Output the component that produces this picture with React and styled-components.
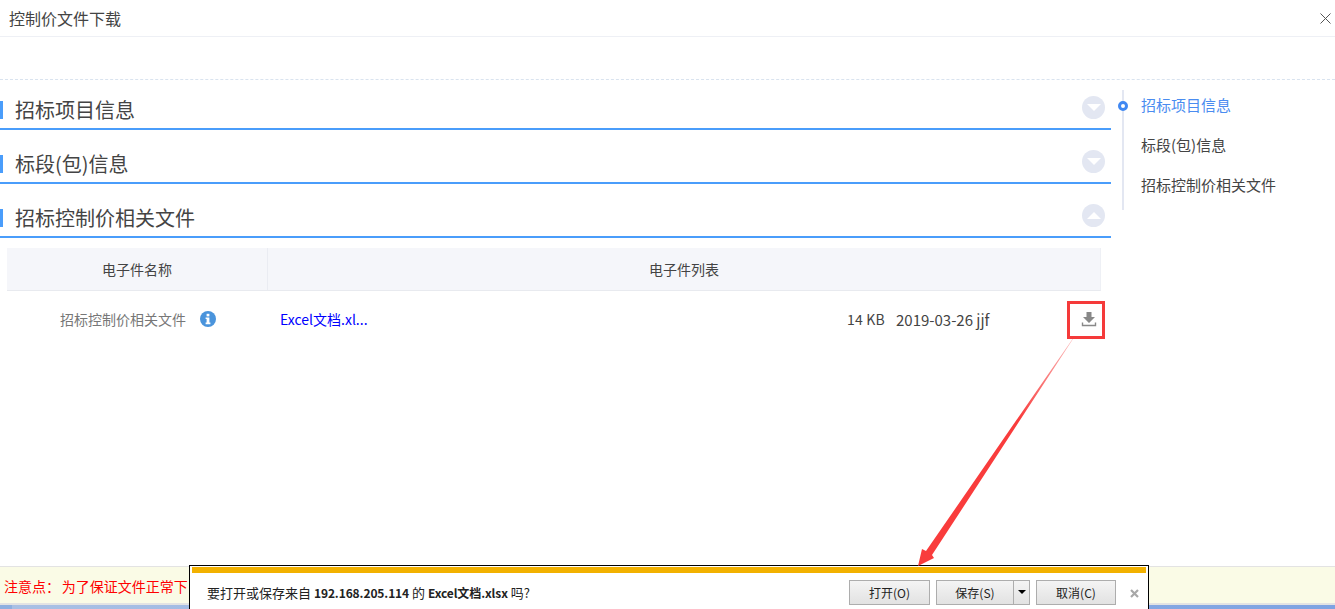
import React from 'react';
import styled, { createGlobalStyle } from 'styled-components';

const GlobalStyle = createGlobalStyle`
  html, body {
    margin: 0;
    padding: 0;
    background: #fff;
    overflow: hidden;
  }
  * {
    box-sizing: border-box;
  }
`;

const Page = styled.div`
  position: relative;
  display: flex;
  flex-direction: column;
  width: 1335px;
  height: 609px;
  overflow: hidden;
  background: #fff;
  font-family: "Noto Sans CJK SC", "Liberation Sans", sans-serif;
  font-size: 14px;
  color: #444;
`;

const Header = styled.div`
  display: flex;
  align-items: center;
  justify-content: space-between;
  height: 37px;
  padding: 0 3px 0 9px;
  border-bottom: 1px solid #eef0f5;
`;

const HeaderTitle = styled.span`
  font-size: 16px;
  line-height: 37px;
  color: #444;
`;

const CloseIcon = styled.svg`
  display: block;
  width: 13px;
  height: 13px;
`;

const Toolbar = styled.div`
  height: 43px;
  border-bottom: 1px dashed #d9e3ef;
`;

const Body = styled.div`
  flex: 1;
  display: flex;
  min-height: 0;
`;

const Main = styled.div`
  width: 1111px;
`;

const Section = styled.div`
  display: flex;
  align-items: center;
  justify-content: space-between;
  height: 54px;
  padding: 16px 6px 0 0;
  border-bottom: 2px solid #4a9dfb;
  &:first-child {
    height: 50px;
    padding-top: 12px;
  }
`;

const SectionTitle = styled.div`
  height: 18px;
  padding-left: 12px;
  border-left: 3px solid #4a9dfb;
  font-size: 20px;
  line-height: 18px;
  color: #444;
`;

const Toggle = styled.span`
  display: flex;
  align-items: center;
  justify-content: center;
  width: 23px;
  height: 23px;
  margin-top: -6px;
  border-radius: 50%;
  background: #e3e7f2;
`;

const Caret = styled.span`
  width: 0;
  height: 0;
  border-left: 7px solid transparent;
  border-right: 7px solid transparent;
  ${(p) => (p.$up ? 'border-bottom: 7px solid #fff;' : 'border-top: 7px solid #fff;')}
`;

const Table = styled.div`
  width: 1094px;
  margin: 10px 0 0 7px;
`;

const TableHead = styled.div`
  display: grid;
  grid-template-columns: 260px 1fr;
  height: 43px;
  background: #f5f6fa;
  border-right: 1px solid #eef0f5;
  border-bottom: 1px solid #e8eaef;
`;

const HeadCell = styled.div`
  display: flex;
  align-items: center;
  justify-content: center;
  color: #444;
  & + & {
    border-left: 1px solid #eaecf2;
  }
`;

const TableRow = styled.div`
  display: flex;
  align-items: center;
  height: 56px;
  color: #444;
`;

const FileLabel = styled.div`
  display: flex;
  align-items: center;
  justify-content: flex-end;
  gap: 14px;
  width: 209px;
  color: #777;
`;

const FileLink = styled.a`
  width: 567px;
  margin-left: 64px;
  color: #0000ff;
`;

const FileSize = styled.span`
  width: 49px;
  letter-spacing: 0.2px;
`;

const FileDate = styled.span`
  width: 185px;
  font-size: 15px;
`;

const DownloadIcon = styled.svg`
  display: block;
  width: 16px;
  height: 16px;
  margin-top: -1px;
`;

const Side = styled.div`
  position: relative;
  margin: 10px 0 0 11px;
  width: 200px;
  height: 120px;
  padding-left: 17px;
  border-left: 2px solid #e3e7f2;
`;

const NavItem = styled.div`
  height: 40px;
  font-size: 15px;
  line-height: 30px;
  color: ${(p) => (p.$active ? '#4a8cf0' : '#444')};
`;

const NavDot = styled.span`
  position: absolute;
  left: -6px;
  top: 11px;
  width: 10px;
  height: 10px;
  border: 3px solid #4088f2;
  border-radius: 50%;
  background: #fff;
`;

const Notice = styled.div`
  height: 39px;
  padding: 1px 0 0 4px;
  background: #fafbe6;
  border-top: 1px solid #e3e3e3;
  border-bottom: 2px solid #e3e3e3;
  color: #ff0000;
  font-size: 14px;
  line-height: 36px;
  word-spacing: -1.5px;
  white-space: nowrap;
`;

const BlueBand = styled.div`
  height: 4px;
  background: linear-gradient(to right, #8fb0e0 0, #8fb0e0 12px, #a9c0e4 12px, #7ea3e2 100%);
`;

const Marker = styled.div`
  position: absolute;
  left: 1067px;
  top: 301px;
  width: 38px;
  height: 38px;
  border: 3px solid #f53a3a;
`;

const ArrowLayer = styled.svg`
  position: absolute;
  left: 0;
  top: 0;
  width: 1335px;
  height: 609px;
  pointer-events: none;
  z-index: 3;
`;

const DownloadBar = styled.div`
  position: absolute;
  left: 189px;
  top: 565px;
  width: 960px;
  height: 44px;
  padding: 1px 1px 0 1px;
  background: #fff;
  border: 1px solid #000;
  border-bottom: 0;
  z-index: 2;
  font-size: 12px;
  color: #222;
`;

const Progress = styled.div`
  height: 6px;
  margin: 0 1px;
  background: #f2b100;
`;

const BarRow = styled.div`
  display: flex;
  align-items: center;
  height: 36px;
  padding: 2px 0 0 16px;
`;

const Question = styled.div`
  flex: 1;
  font-size: 13px;
  white-space: nowrap;
  b {
    font-size: 12px;
    font-weight: 700;
    letter-spacing: -0.1px;
  }
`;

const Btn = styled.div`
  display: flex;
  align-items: center;
  justify-content: center;
  width: ${(p) => p.$w}px;
  height: 25px;
  margin-right: 6px;
  background: linear-gradient(to bottom, #f4f4f4, #e2e2e2);
  border: 1px solid #adadad;
  color: #222;
`;

const SplitBtn = styled.div`
  display: flex;
  width: 94px;
  height: 25px;
  margin-right: 6px;
  border: 1px solid #adadad;
  background: linear-gradient(to bottom, #f4f4f4, #e2e2e2);
`;

const SplitLabel = styled.span`
  flex: 1;
  display: flex;
  align-items: center;
  justify-content: center;
`;

const SplitCaret = styled.span`
  display: flex;
  align-items: center;
  justify-content: center;
  width: 16px;
  border-left: 1px solid #adadad;
  &::after {
    content: '';
    border-left: 4px solid transparent;
    border-right: 4px solid transparent;
    border-top: 4px solid #000;
  }
`;

const BarClose = styled.svg`
  display: block;
  width: 9px;
  height: 9px;
  margin: 2px 8px 0 8px;
`;

const sections = [
  { title: '招标项目信息' },
  { title: '标段(包)信息' },
  { title: '招标控制价相关文件', open: true },
];

const navItems = ['招标项目信息', '标段(包)信息', '招标控制价相关文件'];

const App = () => {
  return (
    <Page>
      <GlobalStyle />
      <Header>
        <HeaderTitle>控制价文件下载</HeaderTitle>
        <CloseIcon viewBox="0 0 13 13">
          <path d="M1.5 1.5L11.5 11.5M11.5 1.5L1.5 11.5" stroke="#555" strokeWidth="1" fill="none" />
        </CloseIcon>
      </Header>
      <Toolbar />
      <Body>
        <Main>
          {sections.map((s) => (
            <Section key={s.title}>
              <SectionTitle>{s.title}</SectionTitle>
              <Toggle>
                <Caret $up={s.open} />
              </Toggle>
            </Section>
          ))}
          <Table>
            <TableHead>
              <HeadCell>电子件名称</HeadCell>
              <HeadCell>电子件列表</HeadCell>
            </TableHead>
            <TableRow>
              <FileLabel>
                招标控制价相关文件
                <svg width="16" height="16" viewBox="0 0 16 16">
                  <circle cx="8" cy="8" r="8" fill="#4a94dc" />
                  <rect x="6.6" y="2.8" width="2.8" height="2.6" fill="#fff" />
                  <path d="M5.6 6.4H9.4V11.6H10.4V13.2H5.6V11.6H6.6V8H5.6Z" fill="#fff" />
                </svg>
              </FileLabel>
              <FileLink>Excel文档.xl...</FileLink>
              <FileSize>14 KB</FileSize>
              <FileDate>2019-03-26 jjf</FileDate>
              <DownloadIcon viewBox="0 0 16 16">
                <path d="M5.5 1H10.5V6H14L8 12L2 6H5.5Z" fill="#888" />
                <path d="M1.5 11.5V14.5H14.5V11.5" stroke="#888" strokeWidth="1.4" fill="none" />
              </DownloadIcon>
            </TableRow>
          </Table>
        </Main>
        <Side>
          <NavDot />
          {navItems.map((item, i) => (
            <NavItem key={item} $active={i === 0}>{item}</NavItem>
          ))}
        </Side>
      </Body>
      <Notice>注意点： 为了保证文件正常下</Notice>
      <BlueBand />

      <Marker />
      <ArrowLayer viewBox="0 0 1335 609">
        <defs>
          <linearGradient id="arrowFade" x1="1073" y1="339" x2="1020" y2="420" gradientUnits="userSpaceOnUse">
            <stop offset="0" stopColor="#f53a3a" stopOpacity="0.35" />
            <stop offset="1" stopColor="#f93c3c" />
          </linearGradient>
        </defs>
        <polygon
          points="1073,339 932,555 934,558 918,566 922,549 926,551 1072.5,339"
          fill="url(#arrowFade)"
        />
      </ArrowLayer>

      <DownloadBar>
        <Progress />
        <BarRow>
          <Question>
            要打开或保存来自 <b>192.168.205.114</b> 的 <b>Excel文档.xlsx</b> 吗?
          </Question>
          <Btn $w={81}>打开(O)</Btn>
          <SplitBtn>
            <SplitLabel>保存(S)</SplitLabel>
            <SplitCaret />
          </SplitBtn>
          <Btn $w={80}>取消(C)</Btn>
          <BarClose viewBox="0 0 9 9">
            <path d="M1 1L8 8M8 1L1 8" stroke="#a8a8a8" strokeWidth="2.2" fill="none" />
          </BarClose>
        </BarRow>
      </DownloadBar>
    </Page>
  );
};

export default App;
